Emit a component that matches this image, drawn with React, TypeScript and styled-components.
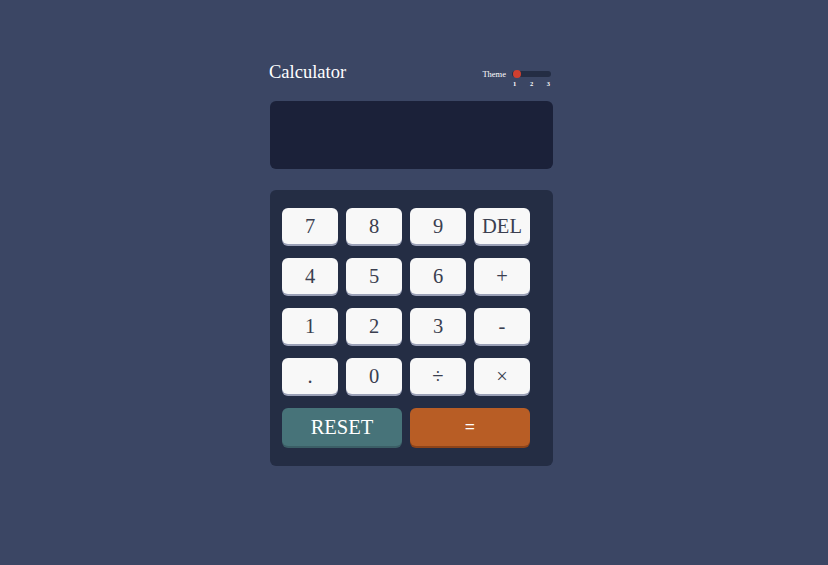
import styled, { createGlobalStyle } from "styled-components";

const GlobalStyle = createGlobalStyle`
  html, body {
    margin: 0;
    padding: 0;
    background: #3b4664;
    font-family: "Liberation Serif", "Times New Roman", serif;
  }
`;

const Page = styled.div`
  min-height: 565px;
  display: flex;
  justify-content: center;
  padding-top: 61px;
  box-sizing: border-box;
`;

const Calc = styled.div`
  width: 283px;
  margin-right: 5px;
  display: flex;
  flex-direction: column;
`;

const Header = styled.div`
  display: flex;
  justify-content: space-between;
  align-items: flex-start;
  height: 40px;
`;

const Title = styled.h1`
  margin: 0;
  margin-left: -1px;
  font-size: 18.5px;
  font-weight: normal;
  color: #ffffff;
  line-height: 22px;
`;

const ThemeBox = styled.div`
  display: flex;
  align-items: flex-start;
  gap: 6px;
  margin-top: 7px;
  margin-right: 2px;
`;

const ThemeLabel = styled.span`
  font-size: 8.5px;
  color: #ffffff;
  line-height: 12px;
`;

const Switch = styled.div`
  display: flex;
  flex-direction: column;
  width: 39px;
  padding-top: 3px;
`;

const Track = styled.div`
  position: relative;
  height: 6px;
  border-radius: 3px;
  background: #242d44;
`;

const Knob = styled.span`
  position: absolute;
  left: 1px;
  top: -1px;
  width: 8px;
  height: 8px;
  border-radius: 50%;
  background: #d03f2f;
`;

const Numbers = styled.div`
  display: flex;
  justify-content: space-between;
  padding: 0 1px 0 1px;
  margin-top: 3px;
  font-size: 6.5px;
  font-weight: bold;
  color: #ffffff;
  line-height: 8px;
`;

const Screen = styled.div`
  height: 68px;
  border-radius: 6px;
  background: #1b2139;
`;

const Keypad = styled.div`
  margin-top: 21px;
  background: #242d44;
  border-radius: 6px;
  padding: 18px 12px;
`;

const Grid = styled.div`
  width: 248px;
  display: grid;
  grid-template-columns: repeat(4, 56px);
  column-gap: 8px;
  row-gap: 12px;
`;

type KeyProps = { $variant?: "reset" | "equal"; $wide?: boolean };

const Key = styled.button<KeyProps>`
  height: ${({ $wide }) => ($wide ? "38px" : "36px")};
  margin-bottom: 2px;
  grid-column: ${({ $wide }) => ($wide ? "span 2" : "auto")};
  border: none;
  border-radius: 6px;
  font-family: "Liberation Serif", "Times New Roman", serif;
  font-size: ${({ $variant }) => ($variant === "equal" ? "18px" : "20.5px")};
  font-weight: ${({ $variant }) => ($variant === "equal" ? "bold" : "normal")};
  padding: 0;
  cursor: pointer;
  background: ${({ $variant }) =>
    $variant === "reset" ? "#477379" : $variant === "equal" ? "#b85d25" : "#f8f8f8"};
  color: ${({ $variant }) => ($variant ? "#ffffff" : "#3b3f50")};
  box-shadow: 0 2px 0
    ${({ $variant }) =>
      $variant === "reset" ? "#3b5e66" : $variant === "equal" ? "#8d4319" : "#9aa0b6"};
`;

const keys = ["7", "8", "9", "DEL", "4", "5", "6", "+", "1", "2", "3", "-", ".", "0", "÷", "×"];

export default function App() {
  return (
    <>
      <GlobalStyle />
      <Page>
        <Calc>
          <Header>
            <Title>Calculator</Title>
            <ThemeBox>
              <ThemeLabel>Theme</ThemeLabel>
              <Switch>
                <Track>
                  <Knob />
                </Track>
                <Numbers>
                  <span>1</span>
                  <span>2</span>
                  <span>3</span>
                </Numbers>
              </Switch>
            </ThemeBox>
          </Header>
          <Screen />
          <Keypad>
            <Grid>
              {keys.map((k) => (
                <Key key={k}>{k}</Key>
              ))}
              <Key $wide $variant="reset">RESET</Key>
              <Key $wide $variant="equal">=</Key>
            </Grid>
          </Keypad>
        </Calc>
      </Page>
    </>
  );
}
